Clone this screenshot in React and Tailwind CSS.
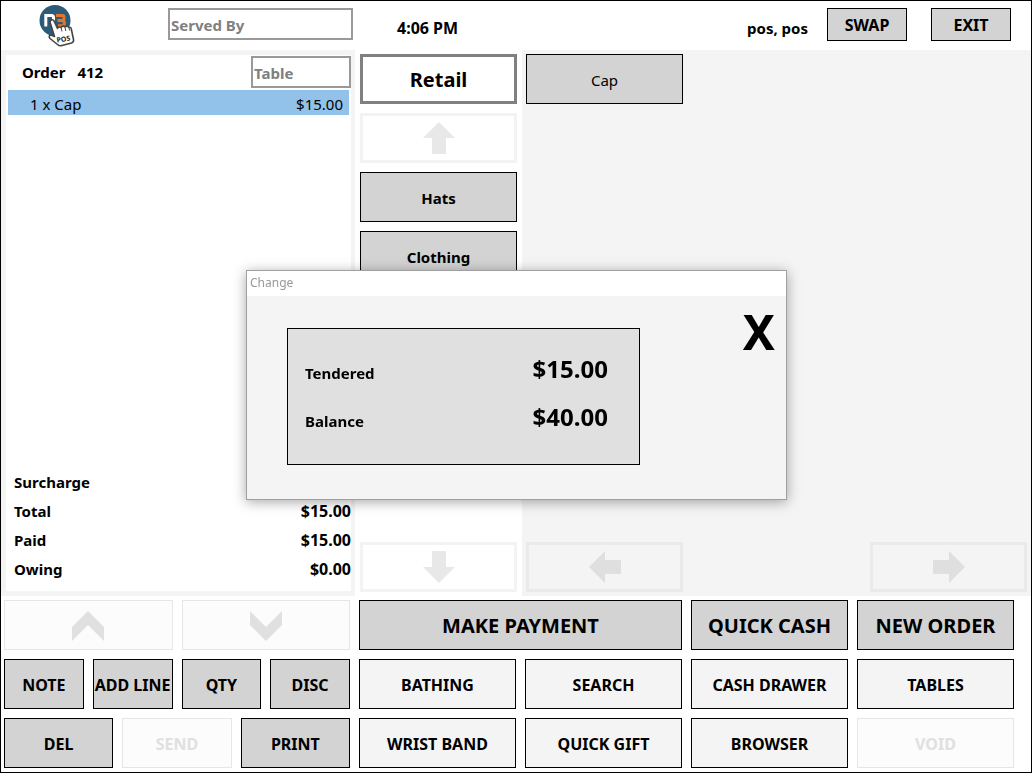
import { useState } from "react";
import clsx from "clsx";

const categories = ["Hats", "Clothing"];
const products = ["Cap"];

const orderLines = [{ id: 1, label: "1 x Cap", price: "$15.00" }];

const totals = [
  { label: "Surcharge", value: "" },
  { label: "Total", value: "$15.00" },
  { label: "Paid", value: "$15.00" },
  { label: "Owing", value: "$0.00" },
];

const functionKeys = [
  { label: "BATHING" },
  { label: "SEARCH" },
  { label: "CASH DRAWER" },
  { label: "TABLES" },
  { label: "WRIST BAND" },
  { label: "QUICK GIFT" },
  { label: "BROWSER" },
  { label: "VOID", disabled: true },
];

const variants = {
  grey: "border border-black bg-[#d3d3d3] pt-0.5",
  light: "border border-black bg-[#f4f4f4] pt-0.5",
  faded: "border border-[#e6e6e6] bg-[#fcfcfc] pt-0.5 text-[#e0e0e0]",
  arrow: "border-3 border-[#f3f3f3] bg-white text-[#e8e8e8]",
  arrowGrey: "border-3 border-[#eaeaea] bg-[#f4f4f4] text-[#dfdfdf]",
};

function Key({ variant = "grey", className, children, ...props }) {
  return (
    <button
      type="button"
      className={clsx(
        "flex h-[50px] items-center justify-center whitespace-nowrap",
        variants[variant],
        className
      )}
      {...props}
    >
      {children}
    </button>
  );
}

function Arrow({ className }) {
  return (
    <svg viewBox="0 0 32 32" className={clsx("size-8 fill-current", className)} aria-hidden="true">
      <path d="M16 0 32 16H23V32H9V16H0Z" />
    </svg>
  );
}

function Chevron({ className }) {
  return (
    <svg viewBox="0 0 32 30" className={clsx("h-[30px] w-8 fill-current", className)} aria-hidden="true">
      <path d="M16 0 32 16V30L16 14 0 30V16Z" />
    </svg>
  );
}

function Logo() {
  return (
    <svg viewBox="39 5 36 42" className="h-[42px] w-9" aria-hidden="true">
      <circle cx="55" cy="20.5" r="15.5" fill="#2b5b78" />
      <path d="M45.8 26.5V15.5H51.5Q53.5 15.5 53.5 17.5V26" fill="none" stroke="#fff" strokeWidth="3" />
      <path
        d="M56 15.5H62.5Q64 15.5 64 17V18.5Q64 20.3 62 20.5Q64.3 20.8 64.3 22.5V24Q64.3 25.8 62.5 25.8H58M57.5 20.5H62"
        fill="none"
        stroke="#e2762d"
        strokeWidth="3"
      />
      <path
        d="M50.5 20.5Q52.5 18.8 54 21L57.5 28.5Q58.5 26 61 27.5Q63 25 65 27Q67.2 25 69 27.5Q71 26.5 71.4 29.5L73.6 40Q73.8 42 71.5 43L61 45.8Q59 46 57.5 44.5L50 38.5Q48 35.5 51 35L54.5 36.5L50.3 23Q50 21.3 50.5 20.5Z"
        fill="#fff"
        stroke="#454545"
        strokeWidth="1.6"
        strokeLinejoin="round"
      />
      <path d="M61.3 28L62 31.5M65 27.5L65.8 31M69 28L69.7 30.5" stroke="#454545" strokeWidth="1" />
      <text x="57" y="42.6" fontSize="7" fontWeight="700" fill="#222" transform="rotate(-9 57 42.6)">
        POS
      </text>
    </svg>
  );
}

function Header() {
  return (
    <header className="grid h-[49px] grid-cols-[354fr_676fr] bg-white">
      <div className="flex items-start pt-1 pl-[38px]">
        <Logo />
        <input
          type="text"
          aria-label="Served By"
          placeholder="Served By"
          className="mt-[3px] mr-0.5 ml-auto h-8 w-[185px] border-2 border-[#999] bg-white px-px pt-0.5 text-[15px] font-bold placeholder:text-[#808080]"
        />
      </div>
      <div className="flex items-start pt-[7px] pr-5 pl-[42px] text-base leading-5 font-bold">
        <time className="pt-2.5">4:06 PM</time>
        <span className="mr-[19px] ml-auto pt-2.5 text-[15px] leading-5">pos, pos</span>
        <button type="button" className="h-[33px] w-20 border border-black bg-[#d3d3d3]">
          SWAP
        </button>
        <button type="button" className="ml-6 h-[33px] w-20 border border-black bg-[#d3d3d3]">
          EXIT
        </button>
      </div>
    </header>
  );
}

function OrderPanel() {
  return (
    <section className="flex flex-col border-5 border-r-4 border-[#f4f4f4] bg-white">
      <div className="flex items-start pt-px pl-4 font-bold">
        <h1 className="pt-1.5">Order</h1>
        <span className="ml-3 pt-1.5">412</span>
        <input
          type="text"
          aria-label="Table"
          placeholder="Table"
          className="ml-auto h-8 w-[100px] border-2 border-[#999] bg-white px-px pt-0.5 text-[15px] font-bold placeholder:text-[#808080]"
        />
      </div>
      <ul className="mx-0.5 mt-0.5 flex-1">
        {orderLines.map((line) => (
          <li
            key={line.id}
            className="flex h-[25px] items-center justify-between bg-[#92c1e9] pt-0.5 pr-1.5 pl-[22px]"
          >
            <span>{line.label}</span>
            <span>{line.price}</span>
          </li>
        ))}
      </ul>
      <dl className="pb-2 pl-2 font-bold">
        {totals.map((row) => (
          <div key={row.label} className="flex h-[29px] items-center justify-between">
            <dt>{row.label}</dt>
            <dd className="text-base leading-5">{row.value}</dd>
          </div>
        ))}
      </dl>
    </section>
  );
}

function CategoryColumn() {
  return (
    <nav className="flex flex-col gap-[9px] bg-white px-[5px] py-1 font-bold">
      <button
        type="button"
        className="h-[50px] border-3 border-[#808080] bg-white pt-0.5 text-xl font-bold"
      >
        Retail
      </button>
      <Key variant="arrow" disabled aria-label="Scroll categories up">
        <Arrow />
      </Key>
      {categories.map((name) => (
        <Key key={name}>{name}</Key>
      ))}
      <Key variant="arrow" disabled className="mt-auto" aria-label="Scroll categories down">
        <Arrow className="rotate-180" />
      </Key>
    </nav>
  );
}

function ProductArea() {
  return (
    <section className="flex flex-col justify-between bg-[#f4f4f4] p-1">
      <div className="grid grid-cols-3 gap-[15px]">
        {products.map((name) => (
          <Key key={name}>{name}</Key>
        ))}
      </div>
      <div className="grid grid-cols-3 gap-[15px]">
        <Key variant="arrowGrey" disabled aria-label="Previous products">
          <Arrow className="-rotate-90" />
        </Key>
        <Key variant="arrowGrey" disabled className="col-start-3" aria-label="Next products">
          <Arrow className="rotate-90" />
        </Key>
      </div>
    </section>
  );
}

function Keypad() {
  return (
    <footer className="grid grid-cols-[354fr_676fr] bg-white py-1 text-base leading-5 font-bold">
      <div className="flex flex-col gap-[9px] pr-[5px] pl-[3px]">
        <div className="grid grid-cols-2 gap-[9px]">
          <Key variant="faded" disabled aria-label="Previous line">
            <Chevron />
          </Key>
          <Key variant="faded" disabled aria-label="Next line">
            <Chevron className="rotate-180" />
          </Key>
        </div>
        <div className="grid grid-cols-4 gap-[9px]">
          <Key>NOTE</Key>
          <Key>ADD LINE</Key>
          <Key>QTY</Key>
          <Key>DISC</Key>
        </div>
        <div className="grid grid-cols-3 gap-[9px]">
          <Key>DEL</Key>
          <Key variant="faded" disabled>
            SEND
          </Key>
          <Key>PRINT</Key>
        </div>
      </div>
      <div className="grid grid-cols-4 gap-[9px] pr-[17px] pl-1">
        <Key className="col-span-2 text-xl">MAKE PAYMENT</Key>
        <Key className="text-xl">QUICK CASH</Key>
        <Key className="text-xl">NEW ORDER</Key>
        {functionKeys.map((key) => (
          <Key key={key.label} variant={key.disabled ? "faded" : "light"} disabled={key.disabled}>
            {key.label}
          </Key>
        ))}
      </div>
    </footer>
  );
}

function ChangeDialog({ onClose }) {
  return (
    <div className="fixed inset-0 flex items-center justify-center pb-[3px] pl-px">
      <div
        role="dialog"
        aria-labelledby="change-title"
        className="w-[541px] border border-[#a0a0a0] bg-[#f4f4f4] shadow-[0_2px_12px_rgba(0,0,0,0.35)]"
      >
        <h2 id="change-title" className="h-[25px] bg-white pl-[3px] text-xs leading-6 text-[#999]">
          Change
        </h2>
        <div className="flex items-start justify-between pt-8 pr-[11px] pb-[34px] pl-10 font-bold">
          <dl className="flex h-[137px] w-[353px] flex-col border border-black bg-[#e0e0e0] pt-4 pr-[31px] pl-[17px]">
            <div className="flex h-12 items-center justify-between">
              <dt className="pt-2">Tendered</dt>
              <dd className="text-2xl">$15.00</dd>
            </div>
            <div className="flex h-12 items-center justify-between">
              <dt className="pt-2">Balance</dt>
              <dd className="text-2xl">$40.00</dd>
            </div>
          </dl>
          <button type="button" aria-label="Close" onClick={onClose} className="-mt-5 text-5xl">
            X
          </button>
        </div>
      </div>
    </div>
  );
}

export default function App() {
  const [showChange, setShowChange] = useState(true);

  return (
    <div className="flex min-h-screen flex-col border border-black bg-white font-['Noto_Sans','Open_Sans',sans-serif] text-[15px] leading-5 text-black">
      <Header />
      <main className="grid flex-1 grid-cols-[354fr_167fr_509fr]">
        <OrderPanel />
        <CategoryColumn />
        <ProductArea />
      </main>
      <Keypad />
      {showChange && <ChangeDialog onClose={() => setShowChange(false)} />}
    </div>
  );
}
